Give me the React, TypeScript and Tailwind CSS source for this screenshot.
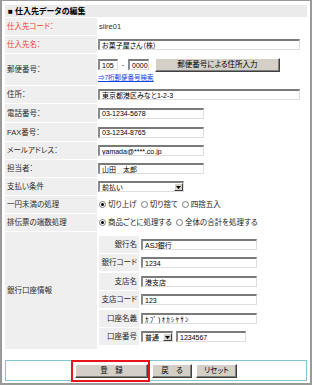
import React from "react";

const FONT = "[font-family:'Liberation_Sans','Noto_Sans_CJK_JP',sans-serif] [font-feature-settings:'palt']";

const inputCls =
  "h-[11px] bg-white border-t-2 border-l-2 border-r border-b border-t-[#7a7a7a] border-l-[#8a8a8a] border-r-[#dedede] border-b-[#dedede] pl-[2px] text-[7px] leading-[9px] text-black flex items-center overflow-hidden whitespace-nowrap";

const btnCls =
  "bg-[#d4d0c8] border border-t-white border-l-white border-r-[#404040] border-b-[#404040] shadow-[inset_-1px_-1px_0_#808080] flex items-center justify-center text-[7.5px] text-black whitespace-nowrap";

function Row({
  label,
  red,
  h,
  children,
}: {
  label: string;
  red?: boolean;
  h: string;
  children?: React.ReactNode;
}) {
  return (
    <div className={`flex ${h}`}>
      <div
        className={`w-[92px] shrink-0 bg-[#efefef] flex items-center pl-[2px] whitespace-nowrap ${
          red ? "text-[#f23a3a]" : "text-[#2a2a2a]"
        }`}
      >
        {label}
      </div>
      <div className="flex-1 pl-[1px] flex items-center">{children}</div>
    </div>
  );
}

function Select({ w, text }: { w: string; text: string }) {
  return (
    <div className={`${w} h-[11px] bg-white border-t-2 border-l-2 border-r border-b border-t-[#7a7a7a] border-l-[#8a8a8a] border-r-[#dedede] border-b-[#dedede] flex items-stretch`}>
      <div className="flex-1 pl-[2px] text-[7px] leading-[9px] text-black flex items-center whitespace-nowrap overflow-hidden">
        {text}
      </div>
      <div className="w-[9px] bg-[#d4d0c8] border border-t-white border-l-white border-r-[#404040] border-b-[#404040] flex items-center justify-center">
        <svg width="5" height="3" viewBox="0 0 5 3">
          <path d="M0 0h5L2.5 3z" fill="#000" />
        </svg>
      </div>
    </div>
  );
}

function Radio({ on, label }: { on?: boolean; label: string }) {
  return (
    <div className="flex items-center gap-[2px]">
      <span className="w-[7px] h-[7px] rounded-full bg-white border border-[#7a7a7a] flex items-center justify-center">
        {on && <span className="w-[3px] h-[3px] rounded-full bg-black" />}
      </span>
      <span className="text-[#222]">{label}</span>
    </div>
  );
}

function SubRow({
  label,
  mt,
  children,
}: {
  label: string;
  mt: string;
  children: React.ReactNode;
}) {
  return (
    <div className={`flex items-center h-[17px] ${mt}`}>
      <div className="w-[40px] h-[17px] bg-[#efefef] flex items-center justify-end pr-[2px] text-[#2a2a2a] whitespace-nowrap">
        {label}
      </div>
      <div className="ml-[2px] flex items-center gap-[3px]">{children}</div>
    </div>
  );
}

export default function App() {
  return (
    <div
      className={`w-[312px] h-[385px] bg-white border-t border-l-2 border-r-2 border-b-2 border-[#9a9a9a] pt-[4px] px-[3px] text-[7.5px] leading-[9px] ${FONT}`}
    >
      <div className="h-[12px] bg-[#ebebeb] flex items-center pl-[3px] font-bold text-black text-[8px]">
        ■&nbsp;仕入先データの編集
      </div>
      <div className="mt-[1px] flex flex-col gap-[1px]">
        <Row label="仕入先コード：" red h="h-[17px]">
          <span className="pl-[1px] text-[#333]">siire01</span>
        </Row>
        <Row label="仕入先名：" red h="h-[17px]">
          <div className={`${inputCls} w-[202px]`}>お菓子屋さん（株）</div>
        </Row>
        <Row label="郵便番号：" h="h-[31px]">
          <div className="flex flex-col self-start pt-[4px]">
            <div className="flex items-center h-[13px]">
              <div className={`${inputCls} w-[20px]`}>105</div>
              <span className="w-[10px] text-center text-[#333]">-</span>
              <div className={`${inputCls} w-[21px]`}>0000</div>
              <div className={`${btnCls} ml-[6px] w-[125px] h-[14px]`}>
                郵便番号による住所入力
              </div>
            </div>
            <div className="mt-[2px] h-[9px] flex items-center">
              <span className="text-[6.5px] text-[#0a3ee8] underline">
                ⇒7桁郵便番号検索
              </span>
            </div>
          </div>
        </Row>
        <Row label="住所：" h="h-[17px]">
          <div className={`${inputCls} w-[202px]`}>東京都港区みなと1-2-3</div>
        </Row>
        <Row label="電話番号：" h="h-[18px]">
          <div className={`${inputCls} w-[106px]`}>03-1234-5678</div>
        </Row>
        <Row label="FAX番号：" h="h-[18px]">
          <div className={`${inputCls} w-[106px]`}>03-1234-8765</div>
        </Row>
        <Row label="メールアドレス：" h="h-[17px]">
          <div className={`${inputCls} w-[106px]`}>yamada@****.co.jp</div>
        </Row>
        <Row label="担当者：" h="h-[17px]">
          <div className={`${inputCls} w-[106px]`}>山田　太郎</div>
        </Row>
        <Row label="支払い条件" h="h-[17px]">
          <Select w="w-[86px]" text="前払い" />
        </Row>
        <Row label="一円未満の処理" h="h-[17px]">
          <div className="flex items-center gap-[4px] pl-[1px]">
            <Radio on label="切り上げ" />
            <Radio label="切り捨て" />
            <Radio label="四捨五入" />
          </div>
        </Row>
        <Row label="排伝票の端数処理" h="h-[17px]">
          <div className="flex items-center gap-[4px] pl-[1px]">
            <Radio on label="商品ごとに処理する" />
            <Radio label="全体の合計を処理する" />
          </div>
        </Row>
        <Row label="銀行口座情報" h="h-[117px]">
          <div className="self-start pt-[4px] pl-[1px] flex flex-col">
            <SubRow label="銀行名" mt="mt-0">
              <div className={`${inputCls} w-[116px]`}>ASJ銀行</div>
            </SubRow>
            <SubRow label="銀行コード" mt="mt-[1px]">
              <div className={`${inputCls} w-[116px]`}>1234</div>
            </SubRow>
            <SubRow label="支店名" mt="mt-[2px]">
              <div className={`${inputCls} w-[116px]`}>港支店</div>
            </SubRow>
            <SubRow label="支店コード" mt="mt-[1px]">
              <div className={`${inputCls} w-[116px]`}>123</div>
            </SubRow>
            <SubRow label="口座名義" mt="mt-[2px]">
              <div className={`${inputCls} w-[116px] tracking-[1.2px]`}>ｶﾌﾞ)ｵｶｼﾔｻﾝ</div>
            </SubRow>
            <SubRow label="口座番号" mt="mt-[1px]">
              <Select w="w-[32px]" text="普通" />
              <div className={`${inputCls} w-[70px]`}>1234567</div>
            </SubRow>
          </div>
        </Row>
      </div>
      <div className="mt-[11px] h-[21px] border border-[#86c4da] flex items-center justify-center gap-[4px]">
        <div className="relative">
          <div className={`${btnCls} w-[73px] h-[14px]`}>登　録</div>
          <span className="absolute left-[-4px] right-[-2px] top-[-4px] bottom-[-4px] border-2 border-[#e8141b]" />
        </div>
        <div className={`${btnCls} w-[40px] h-[14px]`}>戻　る</div>
        <div className={`${btnCls} w-[41px] h-[14px]`}>リセット</div>
      </div>
    </div>
  );
}
